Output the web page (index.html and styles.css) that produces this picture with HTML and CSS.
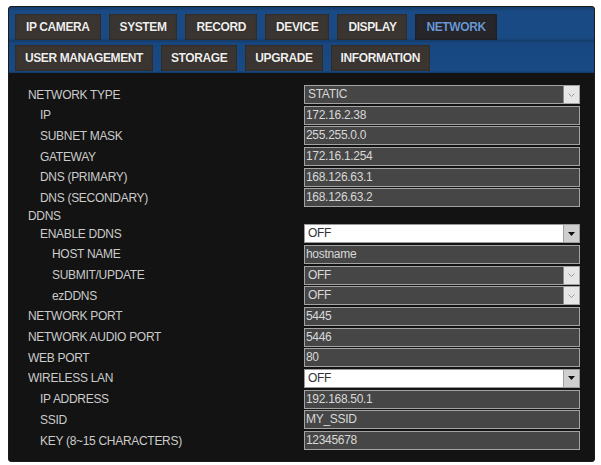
FILE: index.html
```html
<!DOCTYPE html>
<html lang="en">
<head>
  <meta charset="UTF-8">
  <title>Network Setup</title>
  <link rel="stylesheet" href="styles.css">
</head>
<body>
  <div class="panel">
    <div class="tabbar">
      <div class="tab-row">
        <span class="tab">IP CAMERA</span>
        <span class="tab">SYSTEM</span>
        <span class="tab">RECORD</span>
        <span class="tab">DEVICE</span>
        <span class="tab">DISPLAY</span>
        <span class="tab active">NETWORK</span>
      </div>
      <div class="tab-row">
        <span class="tab">USER MANAGEMENT</span>
        <span class="tab">STORAGE</span>
        <span class="tab">UPGRADE</span>
        <span class="tab">INFORMATION</span>
      </div>
    </div>

    <div class="form">
      <div class="row">
        <span class="label">NETWORK TYPE</span>
        <div class="field select"><span class="value">STATIC</span><span class="arrow"><svg width="7" height="4" viewBox="0 0 7 4"><path d="M0.5 0.5 L3.5 3.5 L6.5 0.5" fill="none" stroke="#9a9a9a" stroke-width="1"/></svg></span></div>
      </div>
      <div class="row">
        <span class="label l1">IP</span>
        <div class="field">172.16.2.38</div>
      </div>
      <div class="row">
        <span class="label l1">SUBNET MASK</span>
        <div class="field">255.255.0.0</div>
      </div>
      <div class="row">
        <span class="label l1">GATEWAY</span>
        <div class="field">172.16.1.254</div>
      </div>
      <div class="row">
        <span class="label l1">DNS (PRIMARY)</span>
        <div class="field">168.126.63.1</div>
      </div>
      <div class="row">
        <span class="label l1">DNS (SECONDARY)</span>
        <div class="field">168.126.63.2</div>
      </div>
      <div class="row heading">
        <span class="label">DDNS</span>
      </div>
      <div class="row">
        <span class="label l1">ENABLE DDNS</span>
        <div class="field select on"><span class="value">OFF</span><span class="arrow"><svg width="7" height="4" viewBox="0 0 7 4"><path d="M0 0 L7 0 L3.5 4 Z" fill="#111"/></svg></span></div>
      </div>
      <div class="row">
        <span class="label l2">HOST NAME</span>
        <div class="field">hostname</div>
      </div>
      <div class="row">
        <span class="label l2">SUBMIT/UPDATE</span>
        <div class="field select"><span class="value">OFF</span><span class="arrow"><svg width="7" height="4" viewBox="0 0 7 4"><path d="M0.5 0.5 L3.5 3.5 L6.5 0.5" fill="none" stroke="#9a9a9a" stroke-width="1"/></svg></span></div>
      </div>
      <div class="row">
        <span class="label l2">ezDDNS</span>
        <div class="field select"><span class="value">OFF</span><span class="arrow"><svg width="7" height="4" viewBox="0 0 7 4"><path d="M0.5 0.5 L3.5 3.5 L6.5 0.5" fill="none" stroke="#9a9a9a" stroke-width="1"/></svg></span></div>
      </div>
      <div class="row">
        <span class="label">NETWORK PORT</span>
        <div class="field">5445</div>
      </div>
      <div class="row">
        <span class="label">NETWORK AUDIO PORT</span>
        <div class="field">5446</div>
      </div>
      <div class="row">
        <span class="label">WEB PORT</span>
        <div class="field">80</div>
      </div>
      <div class="row">
        <span class="label">WIRELESS LAN</span>
        <div class="field select on"><span class="value">OFF</span><span class="arrow"><svg width="7" height="4" viewBox="0 0 7 4"><path d="M0 0 L7 0 L3.5 4 Z" fill="#111"/></svg></span></div>
      </div>
      <div class="row">
        <span class="label l1">IP ADDRESS</span>
        <div class="field">192.168.50.1</div>
      </div>
      <div class="row">
        <span class="label l1">SSID</span>
        <div class="field">MY_SSID</div>
      </div>
      <div class="row">
        <span class="label l1">KEY (8~15 CHARACTERS)</span>
        <div class="field">12345678</div>
      </div>
    </div>
  </div>
</body>
</html>
```

FILE: styles.css
```css
body {
  margin: 0;
  background: #ffffff;
  font-family: 'Liberation Sans', Arial, sans-serif;
}
.panel {
  margin: 6px 0 0 8px;
  width: 587px;
  height: 456px;
  box-sizing: border-box;
  background: #131313;
  border: 1px solid #1c1c1c;
  border-radius: 3px;
  overflow: hidden;
}
.tabbar {
  height: 66px;
  box-sizing: border-box;
  padding: 7px 0 2px 6px;
  background: linear-gradient(to bottom, #113a68 0px, #194a83 4px, #194a83 31px, #143c6b 34px, #184780 36px, #194a83 64px, #113864 66px);
}
.tab-row {
  display: flex;
  gap: 8px;
  height: 26px;
}
.tab-row + .tab-row {
  margin-top: 5px;
}
.tab {
  display: flex;
  align-items: center;
  padding: 0 11px;
  background: #3b3531;
  box-shadow: inset 0 0 2px rgba(0, 0, 0, 0.5);
  color: #efefef;
  font-size: 12px;
  font-weight: bold;
  letter-spacing: -0.4px;
  text-shadow: 0 0 1px rgba(0, 0, 0, 0.6);
}
.tab-row + .tab-row .tab {
  padding: 0 10px;
}
.tab.active {
  background: #26262a;
  color: #6a97d6;
}
.form {
  padding: 12px 0 0 19px;
}
.row {
  display: grid;
  grid-template-columns: 276px 276px;
  align-items: center;
  height: 20.7px;
  align-content: start;
}
.row.heading {
  height: 15px;
  align-items: start;
}
.row > .field {
  align-self: start;
}
.label {
  color: #cbcbcb;
  font-size: 12px;
  letter-spacing: -0.3px;
  white-space: nowrap;
}
.label.l1 {
  padding-left: 12px;
}
.label.l2 {
  padding-left: 24px;
}
.field {
  height: 19px;
  box-sizing: border-box;
  border: 1px solid #a3a3a3;
  background: #464646;
  color: #d8d8d8;
  font-size: 12px;
  letter-spacing: -0.3px;
  line-height: 17px;
  padding-left: 1px;
  display: flex;
}
.field .value {
  flex: 1;
  padding-left: 3px;
}
.field.select {
  padding-left: 0;
}
.arrow {
  width: 15px;
  display: flex;
  align-items: center;
  justify-content: center;
  background: #e6e6e6;
  border-left: 1px solid #8a8a8a;
}
.field.on {
  background: #ffffff;
  color: #333;
  border-color: #9a9a9a;
}
.field.on .arrow {
  background: #cfcfcf;
  border-left-color: #a0a0a0;
}
```
